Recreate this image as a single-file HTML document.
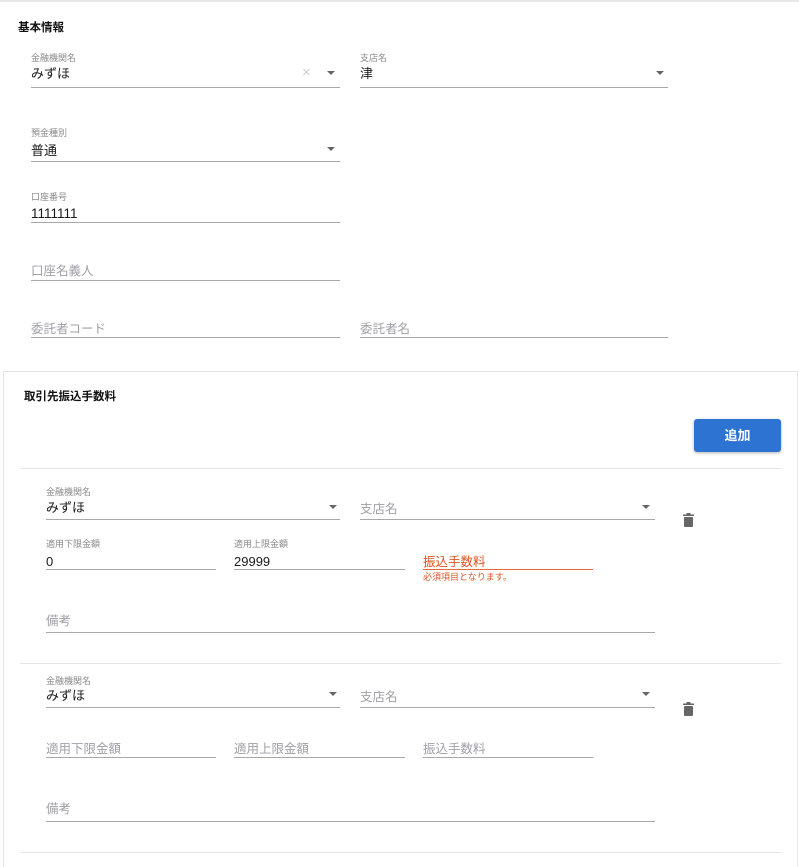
<!DOCTYPE html>
<html style="overflow:hidden;height:867px"><head><meta charset="utf-8"><style>
*{margin:0;padding:0;box-sizing:border-box}
body{width:799px;height:867px;background:#fff;position:relative;overflow:hidden;font-family:"Liberation Sans","Noto Sans CJK JP",sans-serif;color:#222}
div,span{position:absolute}
.lb{font-size:9px;color:#8a8a8a;line-height:12px}
.v{font-size:13px;line-height:16px;color:#1a1a1a}
.ph{font-size:12.5px;line-height:16px;color:#a0a0a8}
.ln{height:1px;background:#a8a8a8}
.ar{width:0;height:0;border-left:4px solid transparent;border-right:4px solid transparent;border-top:4px solid #666}
.dv{height:1px;background:#e6e6e6}
.h{font-size:11.5px;font-weight:bold;line-height:14px;color:#111}
</style></head><body>
<div style="left:0;top:0;width:799px;height:2px;background:#e8e8e8"></div>
<div class="h" style="left:18px;top:21px">基本情報</div>

<div class="lb" style="left:31px;top:52px">金融機関名</div>
<div class="v" style="left:31px;top:66px">みずほ</div>
<div style="left:302px;top:65px;font-size:15px;color:#ccc;line-height:16px">×</div>
<div class="ar" style="left:327px;top:71px"></div>
<div class="ln" style="left:31px;top:87px;width:309px"></div>

<div class="lb" style="left:360px;top:52px">支店名</div>
<div class="v" style="left:360px;top:66px">津</div>
<div class="ar" style="left:656px;top:71px"></div>
<div class="ln" style="left:360px;top:87px;width:308px"></div>

<div class="lb" style="left:31px;top:127px">預金種別</div>
<div class="v" style="left:31px;top:143px">普通</div>
<div class="ar" style="left:327px;top:147px"></div>
<div class="ln" style="left:31px;top:161px;width:309px"></div>

<div class="lb" style="left:31px;top:191px">口座番号</div>
<div class="v" style="left:31px;top:206px;font-size:13.5px">1111111</div>
<div class="ln" style="left:31px;top:222px;width:309px"></div>

<div class="ph" style="left:31px;top:263px">口座名義人</div>
<div class="ln" style="left:31px;top:280px;width:309px"></div>

<div class="ph" style="left:31px;top:321px">委託者コード</div>
<div class="ln" style="left:31px;top:337px;width:309px"></div>
<div class="ph" style="left:360px;top:321px">委託者名</div>
<div class="ln" style="left:360px;top:337px;width:308px"></div>

<div style="left:3px;top:371px;width:795px;height:497px;border:1px solid #e4e6e6;border-bottom:none"></div>
<div class="h" style="left:24px;top:390px">取引先振込手数料</div>
<div style="left:694px;top:419px;width:87px;height:33px;background:#2d74d2;border-radius:3px;box-shadow:0 1px 3px rgba(0,0,0,.3);color:#fff;font-weight:bold;font-size:13px;line-height:33px;text-align:center">追加</div>
<div class="dv" style="left:20px;top:468px;width:761px"></div>

<div class="lb" style="left:46px;top:486px">金融機関名</div>
<div class="v" style="left:46px;top:500px">みずほ</div>
<div class="ar" style="left:329px;top:505px"></div>
<div class="ln" style="left:46px;top:519px;width:294px"></div>
<div class="ph" style="left:360px;top:501px">支店名</div>
<div class="ar" style="left:642px;top:505px"></div>
<div class="ln" style="left:360px;top:519px;width:295px"></div>
<svg style="position:absolute;left:683px;top:513px" width="11" height="14" viewBox="0 0 11 14"><rect x="0" y="1.5" width="11" height="1.5" fill="#666"/><rect x="3.5" y="0" width="4" height="2" fill="#666"/><rect x="1" y="4" width="9" height="10" rx="1" fill="#666"/></svg>

<div class="lb" style="left:46px;top:538px">適用下限金額</div>
<div class="v" style="left:46px;top:554px">0</div>
<div class="ln" style="left:46px;top:569px;width:170px"></div>
<div class="lb" style="left:234px;top:538px">適用上限金額</div>
<div class="v" style="left:234px;top:554px">29999</div>
<div class="ln" style="left:234px;top:569px;width:171px"></div>
<div class="ph" style="left:423px;top:554px;color:#e0541f">振込手数料</div>
<div style="left:423px;top:569px;width:170px;height:1px;background:#e8683a"></div>
<div style="left:423px;top:571px;font-size:9px;color:#e0541f;line-height:12px">必須項目となります。</div>

<div class="ph" style="left:46px;top:613px">備考</div>
<div class="ln" style="left:46px;top:632px;width:609px"></div>
<div class="dv" style="left:20px;top:663px;width:761px"></div>

<div class="lb" style="left:46px;top:675px">金融機関名</div>
<div class="v" style="left:46px;top:688px">みずほ</div>
<div class="ar" style="left:329px;top:692px"></div>
<div class="ln" style="left:46px;top:707px;width:294px"></div>
<div class="ph" style="left:360px;top:689px">支店名</div>
<div class="ar" style="left:642px;top:692px"></div>
<div class="ln" style="left:360px;top:707px;width:295px"></div>
<svg style="position:absolute;left:683px;top:702px" width="11" height="14" viewBox="0 0 11 14"><rect x="0" y="1.5" width="11" height="1.5" fill="#666"/><rect x="3.5" y="0" width="4" height="2" fill="#666"/><rect x="1" y="4" width="9" height="10" rx="1" fill="#666"/></svg>

<div class="ph" style="left:46px;top:741px">適用下限金額</div>
<div class="ln" style="left:46px;top:757px;width:170px"></div>
<div class="ph" style="left:234px;top:741px">適用上限金額</div>
<div class="ln" style="left:234px;top:757px;width:171px"></div>
<div class="ph" style="left:423px;top:741px">振込手数料</div>
<div class="ln" style="left:423px;top:757px;width:170px"></div>

<div class="ph" style="left:46px;top:801px">備考</div>
<div class="ln" style="left:46px;top:821px;width:609px"></div>
<div class="dv" style="left:20px;top:852px;width:761px"></div>
</body></html>
